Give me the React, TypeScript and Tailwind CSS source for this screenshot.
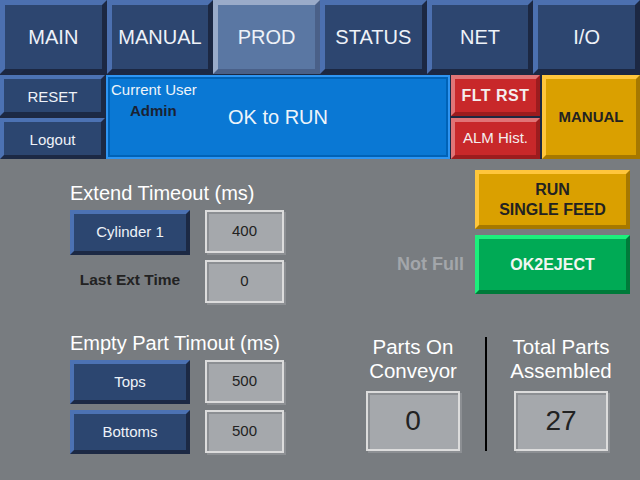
import React from "react";

const navBtn =
  "flex items-center justify-center border-[5px] border-t-[#4c70b0] border-l-[#4c70b0] border-b-[#1c2843] border-r-[#1c2843] bg-[#2d4670] text-[20px] text-[#eef2f8]";
const navActive =
  "flex items-center justify-center border-[5px] border-t-[#9aabc9] border-l-[#9aabc9] border-b-[#4a6088] border-r-[#4a6088] bg-[#5a77a3] text-[20px] text-[#eef2f8]";
const smallBlue =
  "flex items-center justify-center border-[4px] border-t-[#4c72b3] border-l-[#4c72b3] border-b-[#1c2944] border-r-[#1c2944] bg-[#2c4670] text-[15px] text-[#eef2f8]";
const redBtn =
  "flex items-center justify-center border-[4px] border-t-[#e07476] border-l-[#e07476] border-b-[#9c1c1e] border-r-[#9c1c1e] bg-[#c8282a] text-[#f4eeee]";
const yellowBtn =
  "flex flex-col items-center justify-center border-[4px] border-t-[#ffc63c] border-l-[#ffc63c] border-b-[#a67800] border-r-[#a67800] bg-[#daa000] font-bold text-[#222222]";
const greenBtn =
  "flex items-center justify-center border-[4px] border-t-[#1cf07c] border-l-[#1cf07c] border-b-[#007a3a] border-r-[#007a3a] bg-[#00aa55] font-bold text-[#f2f6f2]";
const valueBox =
  "flex items-center justify-center border-2 border-[#dcdcdc] bg-[#a5a8ac] shadow-[2px_2px_0_#8c8f93,inset_2px_2px_0_#8c8f93] text-[#222222]";

export default function App() {
  return (
    <div className="w-[640px] h-[480px] overflow-hidden bg-[#787c80] font-['Liberation_Sans',Arial,sans-serif] flex flex-col">
      {/* Header */}
      <div className="bg-[#1d2841] flex flex-col h-[159px]">
        <div className="grid grid-cols-6 h-[74px]">
          <div className={navBtn}>MAIN</div>
          <div className={navBtn}>MANUAL</div>
          <div className={navActive}>PROD</div>
          <div className={navBtn}>STATUS</div>
          <div className={navBtn}>NET</div>
          <div className={navBtn}>I/O</div>
        </div>
        <div className="grid grid-cols-[105px_344px_89px_1fr] mt-[1px] flex-1 gap-x-[1px]">
          <div className="flex flex-col gap-[2px]">
            <div className={smallBlue + " flex-1 pt-[3px]"}>RESET</div>
            <div className={smallBlue + " flex-1 pt-[3px]"}>Logout</div>
          </div>
          <div className="border-2 border-[#2f95f2] bg-[#0a78d4] shadow-[inset_0_0_0_2px_#0062b6] relative">
            <div className="pl-[3px] pt-[4px] text-[15px] leading-[18px] text-[#eef4fa]">Current User</div>
            <div className="pl-[22px] mt-[3px] text-[15px] leading-[18px] font-bold text-[#1a2233]">Admin</div>
            <div className="absolute left-0 right-0 top-[25px] text-center text-[20px] text-[#eef4fa]">OK to RUN</div>
          </div>
          <div className="flex flex-col gap-[2px]">
            <div className={redBtn + " flex-1 text-[16px] font-bold tracking-[0.5px]"}>FLT RST</div>
            <div className={redBtn + " flex-1 text-[15px]"}>ALM Hist.</div>
          </div>
          <div className={yellowBtn + " text-[15px] ml-[1px]"}>MANUAL</div>
        </div>
      </div>

      {/* Body top */}
      <div className="flex h-[151px]">
        <div className="w-[284px] pl-[70px] pt-[23px] shrink-0">
          <div className="text-[20px] leading-[23px] text-white whitespace-nowrap">Extend Timeout (ms)</div>
          <div className="flex mt-[5px] items-start">
            <div className={smallBlue + " w-[120px] h-[45px]"}>Cylinder 1</div>
            <div className={valueBox + " ml-[15px] w-[79px] h-[43px] text-[15px]"}>400</div>
          </div>
          <div className="flex mt-[5px] items-center">
            <div className="w-[120px] text-center text-[15.5px] font-bold text-[#222222] -mt-[4px]">Last Ext Time</div>
            <div className={valueBox + " ml-[15px] w-[79px] h-[43px] text-[15px]"}>0</div>
          </div>
        </div>
        <div className="ml-auto pr-[10px] pt-[11px] flex flex-col items-end">
          <div className={yellowBtn + " w-[155px] h-[59px] text-[16px] leading-[20px]"}>
            <span>RUN</span>
            <span>SINGLE FEED</span>
          </div>
          <div className="flex items-center mt-[6px]">
            <span className="text-[18px] font-bold text-[#a3a6aa] mr-[11px]">Not Full</span>
            <div className={greenBtn + " w-[155px] h-[59px] text-[16px]"}>OK2EJECT</div>
          </div>
        </div>
      </div>

      {/* Body bottom */}
      <div className="flex flex-1">
        <div className="w-[284px] pl-[70px] pt-[22px] shrink-0">
          <div className="text-[20px] leading-[23px] text-white whitespace-nowrap">Empty Part Timout (ms)</div>
          <div className="flex mt-[5px] items-start">
            <div className={smallBlue + " w-[120px] h-[44px]"}>Tops</div>
            <div className={valueBox + " ml-[15px] w-[79px] h-[43px] text-[15px]"}>500</div>
          </div>
          <div className="flex mt-[6px] items-start">
            <div className={smallBlue + " w-[120px] h-[44px]"}>Bottoms</div>
            <div className={valueBox + " ml-[15px] w-[79px] h-[43px] text-[15px]"}>500</div>
          </div>
        </div>
        <div className="ml-[69px] w-[120px] pt-[25px] flex flex-col items-center">
          <div className="text-[20.5px] leading-[24px] text-white text-center whitespace-nowrap">
            Parts On
            <br />
            Conveyor
          </div>
          <div className={valueBox + " mt-[8px] w-[94px] h-[60px] text-[28px]"}>0</div>
        </div>
        <div className="ml-[12px] mt-[27px] w-[2px] h-[114px] bg-black" />
        <div className="ml-[14px] w-[120px] pt-[25px] flex flex-col items-center">
          <div className="text-[20.5px] leading-[24px] text-white text-center whitespace-nowrap">
            Total Parts
            <br />
            Assembled
          </div>
          <div className={valueBox + " mt-[8px] w-[94px] h-[60px] text-[28px]"}>27</div>
        </div>
      </div>
    </div>
  );
}
